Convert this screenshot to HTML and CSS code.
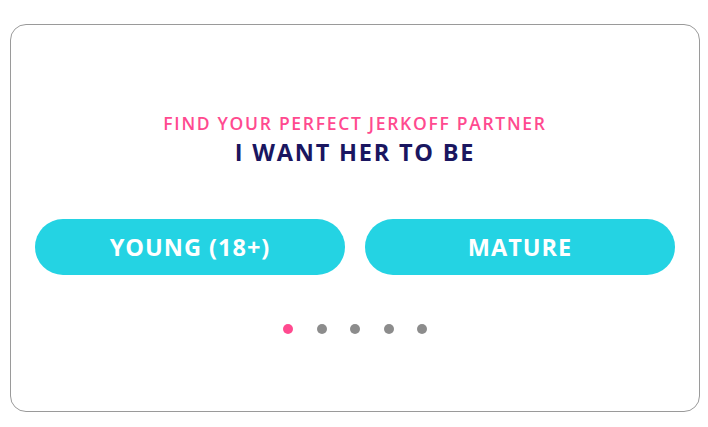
FILE: index.html
```html
<!DOCTYPE html>
<html>
<head>
<meta charset="utf-8">
<link rel="stylesheet" href="styles.css">
</head>
<body>
<div class="card">
  <div class="heading">
    <p class="kicker">FIND YOUR PERFECT JERKOFF PARTNER</p>
    <h1 class="title">I WANT HER TO BE</h1>
  </div>
  <div class="choices">
    <button class="choice">YOUNG (18+)</button>
    <button class="choice">MATURE</button>
  </div>
  <div class="dots">
    <span class="dot active"></span>
    <span class="dot"></span>
    <span class="dot"></span>
    <span class="dot"></span>
    <span class="dot"></span>
  </div>
</div>
</body>
</html>
```

FILE: styles.css
```css
html, body {
  margin: 0;
  padding: 0;
  background: #ffffff;
}
body {
  padding: 24px 8px 0 10px;
  font-family: "Open Sans", "Liberation Sans", sans-serif;
}
.card {
  box-sizing: border-box;
  width: 690px;
  height: 388px;
  border: 1px solid #9a9a9a;
  border-radius: 16px;
  padding: 0 24px;
  display: flex;
  flex-direction: column;
  align-items: stretch;
}
.heading {
  margin-top: 86px;
  display: flex;
  flex-direction: column;
  align-items: center;
}
.kicker {
  margin: 0;
  color: #ff4a8f;
  font-size: 17.5px;
  font-weight: 600;
  line-height: 24px;
  letter-spacing: 1.7px;
}
.title {
  margin: 2px 0 0;
  color: #1a1660;
  font-size: 23.5px;
  font-weight: 700;
  line-height: 30px;
  letter-spacing: 1.8px;
}
.choices {
  margin-top: 52px;
  display: flex;
  gap: 20px;
}
.choice {
  flex: 1;
  height: 56px;
  border: none;
  border-radius: 28px;
  background: #24d3e3;
  color: #ffffff;
  font-family: inherit;
  font-size: 23.5px;
  font-weight: 700;
  letter-spacing: 1px;
  padding: 0;
}
.dots {
  margin-top: 49px;
  display: flex;
  justify-content: center;
  gap: 23.5px;
}
.dot {
  width: 10px;
  height: 10px;
  border-radius: 50%;
  background: #8c8c8c;
}
.dot.active {
  background: #ff4a8f;
}
```
